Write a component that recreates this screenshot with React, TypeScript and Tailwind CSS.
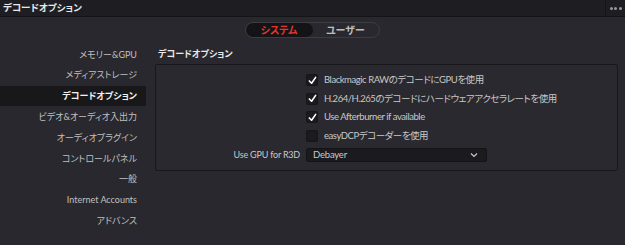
import React from "react";

const font = { fontFamily: 'Lato, "Noto Sans CJK JP", sans-serif' };

function Check({ checked }: { checked: boolean }) {
  return (
    <div className="w-[12px] h-[12px] rounded-[2px] bg-[#1b1b1f] border border-[#161619] flex items-center justify-center">
      {checked && (
        <svg width="9" height="9" viewBox="0 0 10 10">
          <path d="M1.5 5.5 L4 8 L8.5 1.5" stroke="#ffffff" strokeWidth="1.8" fill="none" strokeLinecap="round" strokeLinejoin="round" />
        </svg>
      )}
    </div>
  );
}

export default function App() {
  const side = [
    "メモリー&GPU",
    "メディアストレージ",
    "デコードオプション",
    "ビデオ&オーディオ入出力",
    "オーディオプラグイン",
    "コントロールパネル",
    "一般",
    "Internet Accounts",
    "アドバンス",
  ];
  const opts: [string, boolean][] = [
    ["Blackmagic RAWのデコードにGPUを使用", true],
    ["H.264/H.265のデコードにハードウェアアクセラレートを使用", true],
    ["Use Afterburner if available", true],
    ["easyDCPデコーダーを使用", false],
  ];
  return (
    <div className="w-[625px] h-[245px] bg-[#28282e] flex flex-col overflow-hidden [font-feature-settings:'palt']" style={font}>
      <div className="h-[17px] bg-[#1e1e22] border-b border-[#141417] flex items-center">
        <div className="flex-1 pl-[3px] text-[9.5px] font-bold text-[#e8e8e8] leading-none">デコードオプション</div>
        <div className="w-[20px] h-full border-l border-[#141417] flex items-center justify-center gap-[1.5px]">
          <span className="w-[3px] h-[3px] rounded-full bg-[#9a9a9a]" />
          <span className="w-[3px] h-[3px] rounded-full bg-[#9a9a9a]" />
          <span className="w-[3px] h-[3px] rounded-full bg-[#9a9a9a]" />
        </div>
      </div>
      <div className="flex justify-center pt-[5px]">
        <div className="ml-[-1px] flex w-[135px] h-[16px] rounded-full border border-[#3c3c43] bg-[#28282e] overflow-hidden text-[10px] font-bold leading-none">
          <div className="w-[67px] h-full bg-[#141417] rounded-full flex items-center justify-center text-[#e2372f]">システム</div>
          <div className="flex-1 h-full flex items-center justify-center text-[#bdbdbd]">ユーザー</div>
        </div>
      </div>
      <div className="flex flex-1 pt-[6px]">
        <div className="w-[146px] flex flex-col text-[9px] text-[#c0c0c0]">
          {side.map((s, i) => (
            <div
              key={s}
              className={`h-[20.8px] flex items-center justify-end pr-[9px] ${i === 2 ? "bg-[#18181b] text-[#f2f2f2] font-bold" : ""}`}
            >
              {s}
            </div>
          ))}
        </div>
        <div className="flex-1 pl-[9px] pr-[7px]">
          <div className="h-[20px] flex items-center pl-[3px] text-[9px] font-bold text-[#e8e8e8]">デコードオプション</div>
          <div className="h-[107px] border border-[#18181b] rounded-[2px] bg-[#29292f] pt-[6px] flex flex-col">
            {opts.map(([t, c]) => (
              <div key={t} className="h-[18.5px] flex items-center pl-[150px] gap-[6px] text-[9.5px] tracking-[-0.45px] text-[#c8c8c8]">
                <Check checked={c} />
                <span>{t}</span>
              </div>
            ))}
            <div className="h-[20px] flex items-center text-[9px] tracking-[-0.2px] text-[#c8c8c8]">
              <div className="w-[144px] text-right">Use GPU for R3D</div>
              <div className="ml-[6px] w-[181px] h-[14px] bg-[#1b1b1f] border border-[#141417] rounded-[2px] flex items-center justify-between pl-[6px] pr-[8px] text-[9.5px]">
                <span>Debayer</span>
                <svg width="8" height="6" viewBox="0 0 8 6">
                  <path d="M1 1.5 L4 4.5 L7 1.5" stroke="#c8c8c8" strokeWidth="1.2" fill="none" />
                </svg>
              </div>
            </div>
          </div>
        </div>
      </div>
    </div>
  );
}
